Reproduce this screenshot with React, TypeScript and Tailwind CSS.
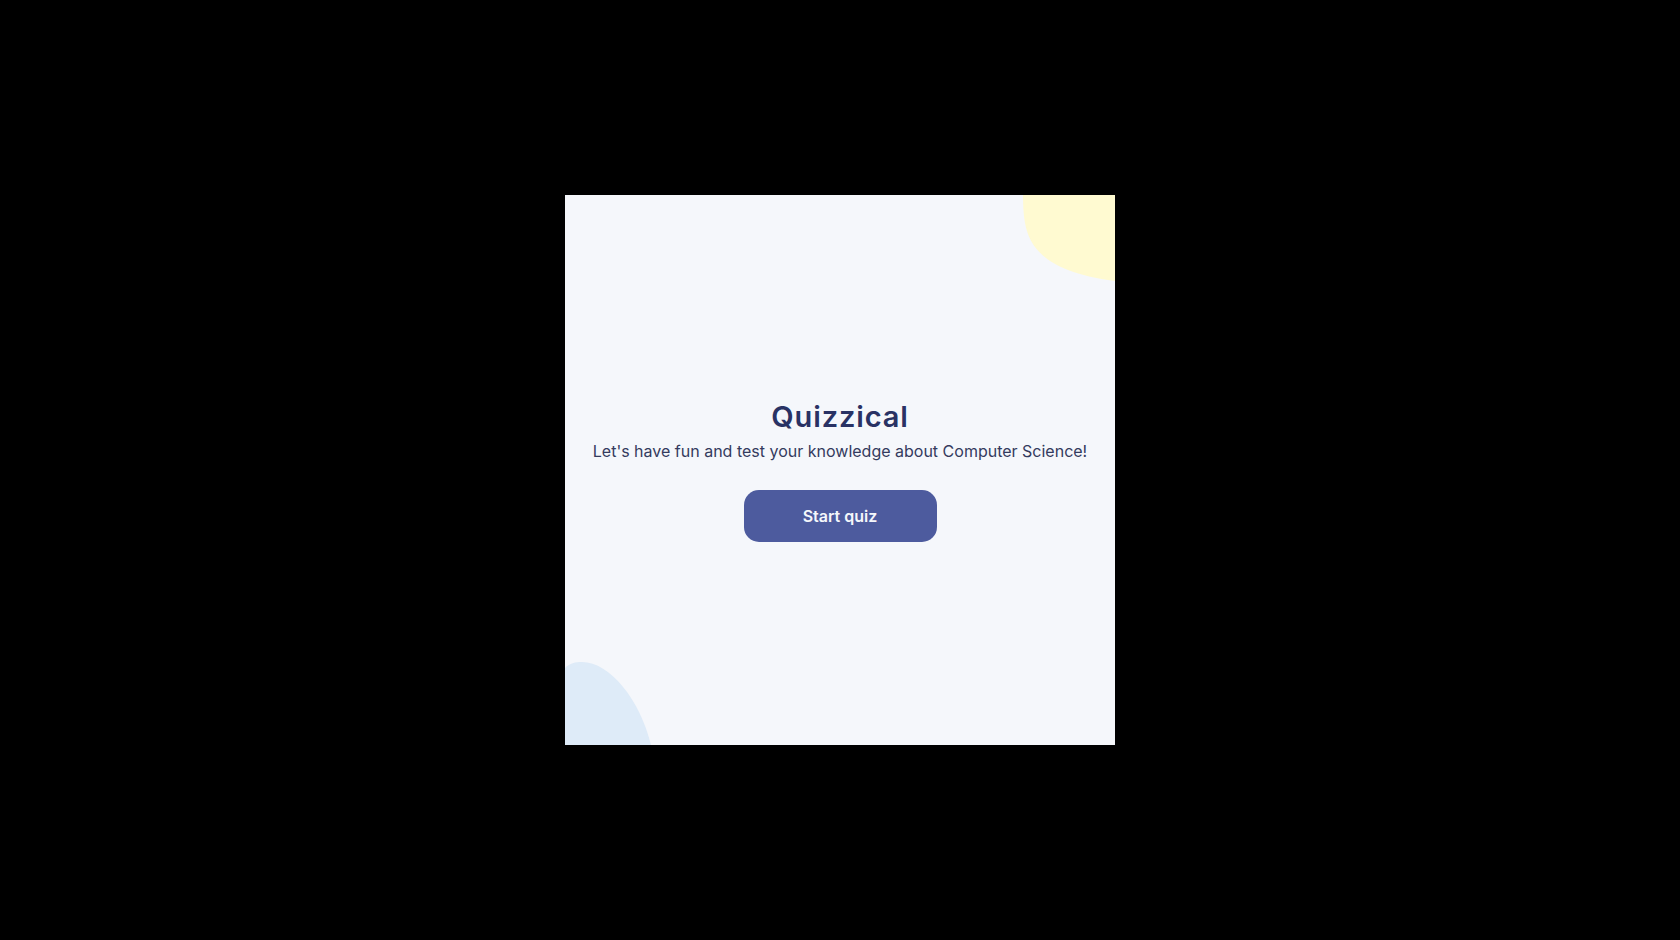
export default function App() {
  return (
    <div className="w-[1680px] h-[940px] bg-black flex items-center justify-center" style={{ fontFamily: "Inter, 'Noto Sans', sans-serif" }}>
      <div className="relative w-[550px] h-[550px] bg-[#F5F7FB] overflow-hidden flex flex-col items-center justify-center">
        <svg className="absolute top-0 left-0" width="550" height="550" viewBox="0 0 550 550">
          <path d="M458 0 C458 25 461 40 470 52 C482 68 505 80 550 86 L550 0 Z" fill="#FFFAD1" />
          <path d="M0 473 C5 468 10 467 17 467 C45 467 75 505 86 550 L0 550 Z" fill="#DEEBF8" />
        </svg>
        <h1 className="relative text-[29px] leading-[36px] font-semibold text-[#293264] tracking-[0.03em]">Quizzical</h1>
        <p className="relative mt-[4px] text-base leading-6 text-[#343b5e]">Let's have fun and test your knowledge about Computer Science!</p>
        <button className="relative mt-[27px] w-[193px] h-[52px] rounded-[15px] bg-[#4D5B9E] text-[#F5F7FB] text-base font-semibold">Start quiz</button>
      </div>
    </div>
  );
}
